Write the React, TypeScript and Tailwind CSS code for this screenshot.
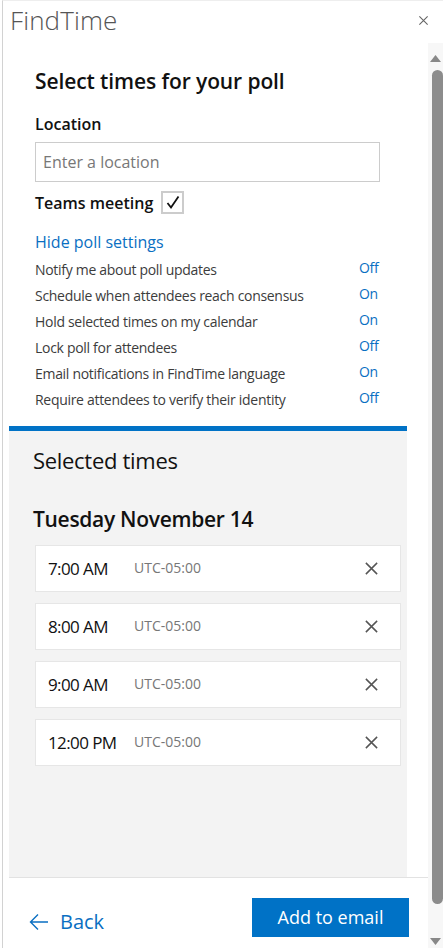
import React from "react";

const settings: { label: string; value: string }[] = [
  { label: "Notify me about poll updates", value: "Off" },
  { label: "Schedule when attendees reach consensus", value: "On" },
  { label: "Hold selected times on my calendar", value: "On" },
  { label: "Lock poll for attendees", value: "Off" },
  { label: "Email notifications in FindTime language", value: "On" },
  { label: "Require attendees to verify their identity", value: "Off" },
];

const times = ["7:00 AM", "8:00 AM", "9:00 AM", "12:00 PM"];

const CloseIcon = ({ size, color }: { size: number; color: string }) => (
  <svg width={size} height={size} viewBox="0 0 16 16" fill="none">
    <path d="M2 2 L14 14 M14 2 L2 14" stroke={color} strokeWidth="1.6" />
  </svg>
);

const App: React.FC = () => {
  return (
    <div
      className="flex h-[948px] w-[443px] overflow-hidden bg-white"
      style={{ fontFamily: '"Segoe UI", "Open Sans", sans-serif' }}
    >
      <div className="ml-[2px] flex flex-1 flex-col border-l border-t border-l-[#d2d2d2] border-t-[#eeeeee]">
        {/* header */}
        <div className="flex h-[42px] shrink-0 items-center justify-between pb-[4px] pl-[7px] pr-[14px]">
          <span className="text-[26px] font-light leading-none text-[#555555] tracking-[0.1px]">
            FindTime
          </span>
          <CloseIcon size={11} color="#666666" />
        </div>

        <div className="flex flex-1">
          <div className="flex flex-1 flex-col pl-[6px]">
            <div className="flex flex-1 flex-col pr-[21px]">
              {/* poll settings */}
              <div className="pl-[26px] pr-[20px] pt-[24px]">
                <h1 className="text-[21px] font-semibold leading-[28px] text-[#111111] tracking-[-0.1px]">
                  Select times for your poll
                </h1>
                <div className="mt-[18px] text-[16px] font-semibold leading-[22px] text-[#111111]">
                  Location
                </div>
                <div className="mt-[7px] flex h-[40px] w-[345px] items-center border border-[#cccccc] px-[7px] text-[16px] text-[#777777]">
                  Enter a location
                </div>
                <div className="mt-[9px] flex items-center gap-[8px]">
                  <span className="text-[16px] font-semibold leading-[22px] text-[#111111]">
                    Teams meeting
                  </span>
                  <span className="flex h-[23px] w-[23px] items-center justify-center border-2 border-[#cccccc]">
                    <svg width="14" height="15" viewBox="0 0 14 15" fill="none">
                      <path d="M1.5 8 L5 12.5 L12.5 1.5" stroke="#111111" strokeWidth="1.8" />
                    </svg>
                  </span>
                </div>
                <div className="mt-[17px] text-[16px] leading-[22px] text-[#0a6fc2]">
                  Hide poll settings
                </div>
                <div className="mt-[3px] flex flex-col">
                  {settings.map((s) => (
                    <div
                      key={s.label}
                      className="flex h-[26px] items-center justify-between text-[14px] text-[#3c3c3c] tracking-[-0.3px]"
                    >
                      <span>{s.label}</span>
                      <span className="-mt-[4px] w-[28px] text-[#0a6fc2]">{s.value}</span>
                    </div>
                  ))}
                </div>
              </div>

              {/* selected times */}
              <div className="mt-[14px] flex flex-1 flex-col border-t-[5px] border-[#0072c6] bg-[#f3f3f3] pl-[24px] pr-[6px]">
                <h2 className="mt-[14px] text-[22px] leading-[30px] text-[#111111] tracking-[-0.3px]">
                  Selected times
                </h2>
                <h3 className="mt-[29px] text-[21px] font-semibold leading-[30px] text-[#111111] tracking-[-0.3px]">
                  Tuesday November 14
                </h3>
                <div className="mt-[11px] flex flex-col gap-[11px] pl-[2px]">
                  {times.map((t) => (
                    <div
                      key={t}
                      className="flex h-[47px] items-center border border-[#e6e6e6] bg-white pl-[12px] pr-[21px]"
                    >
                      <span className="w-[86px] text-[17px] text-[#111111] tracking-[-0.6px]">{t}</span>
                      <span className="-mt-[3px] text-[14px] text-[#777777]">UTC-05:00</span>
                      <span className="ml-auto flex">
                        <CloseIcon size={15} color="#555555" />
                      </span>
                    </div>
                  ))}
                </div>
              </div>
            </div>

            {/* footer */}
            <div className="flex h-[71px] shrink-0 items-center justify-between border-t border-[#e2e2e2] pt-[8px] pl-[20px] pr-[19px]">
              <div className="mt-[9px] flex items-center gap-[11px] text-[#0a6fc2]">
                <svg width="20" height="18" viewBox="0 0 20 18" fill="none">
                  <path d="M19 9 H2 M9 1.5 L1.5 9 L9 16.5" stroke="#0a6fc2" strokeWidth="1.4" />
                </svg>
                <span className="text-[20px] leading-none">Back</span>
              </div>
              <button className="h-[39px] w-[157px] bg-[#0072c6] text-[18px] text-white">
                Add to email
              </button>
            </div>
          </div>

          {/* scrollbar */}
          <div className="flex w-[15px] shrink-0 flex-col items-center bg-[#f7f7f7] pt-[12px] pb-[3px]">
            <svg width="11" height="7" viewBox="0 0 11 7">
              <path d="M0 7 L5.5 0 L11 7 Z" fill="#888888" />
            </svg>
            <div className="mt-[8px] ml-[3px] h-[834px] w-[11px] rounded-full bg-[#8c8c8c]" />
            <div className="mt-auto">
              <svg width="11" height="7" viewBox="0 0 11 7">
                <path d="M0 0 L11 0 L5.5 7 Z" fill="#888888" />
              </svg>
            </div>
          </div>
        </div>
      </div>
    </div>
  );
};

export default App;
